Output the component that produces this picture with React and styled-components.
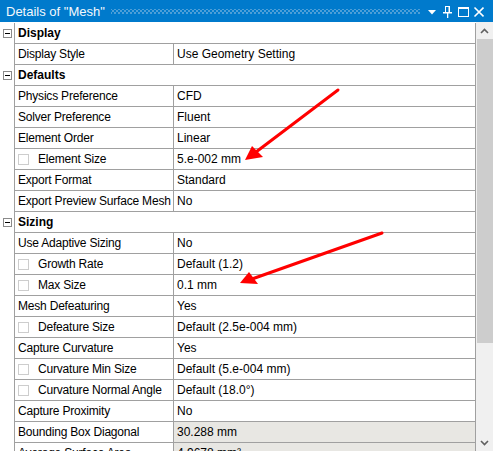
import React from 'react';
import styled, { createGlobalStyle } from 'styled-components';

// * =================================
// *       Details-Panel
// * =================================

const sections = [
  {
    title: 'Display',
    rows: [{ label: 'Display Style', value: 'Use Geometry Setting' }],
  },
  {
    title: 'Defaults',
    rows: [
      { label: 'Physics Preference', value: 'CFD' },
      { label: 'Solver Preference', value: 'Fluent' },
      { label: 'Element Order', value: 'Linear' },
      { label: 'Element Size', value: '5.e-002 mm', check: true },
      { label: 'Export Format', value: 'Standard' },
      { label: 'Export Preview Surface Mesh', value: 'No' },
    ],
  },
  {
    title: 'Sizing',
    rows: [
      { label: 'Use Adaptive Sizing', value: 'No' },
      { label: 'Growth Rate', value: 'Default (1.2)', check: true },
      { label: 'Max Size', value: '0.1 mm', check: true },
      { label: 'Mesh Defeaturing', value: 'Yes' },
      { label: 'Defeature Size', value: 'Default (2.5e-004 mm)', check: true },
      { label: 'Capture Curvature', value: 'Yes' },
      { label: 'Curvature Min Size', value: 'Default (5.e-004 mm)', check: true },
      { label: 'Curvature Normal Angle', value: 'Default (18.0°)', check: true },
      { label: 'Capture Proximity', value: 'No' },
      { label: 'Bounding Box Diagonal', value: '30.288 mm', readOnly: true },
      { label: 'Average Surface Area', value: '4.9678 mm²', readOnly: true },
    ],
  },
];

const TitleIcons = () => (
  <svg width="64" height="22" viewBox="0 0 64 22">
    {/* dropdown */}
    <polygon points="8,10 16,10 12,14.5" fill="#fff" />
    {/* pin */}
    <rect x="25.5" y="6.5" width="4" height="6" fill="none" stroke="#fff" />
    <rect x="28.5" y="6" width="1.5" height="7" fill="#fff" />
    <rect x="23" y="12" width="9" height="1.5" fill="#fff" />
    <rect x="27" y="13" width="1.3" height="5" fill="#fff" />
    {/* maximize */}
    <rect x="38.5" y="7.5" width="10" height="9" fill="none" stroke="#fff" />
    <rect x="38" y="7" width="11" height="2" fill="#fff" />
    {/* close */}
    <path d="M54.5 7.5 L63.5 16.5 M63.5 7.5 L54.5 16.5" stroke="#fff" strokeWidth="1.6" />
  </svg>
);

const Arrows = () => (
  <ArrowLayer width="493" height="451" viewBox="0 0 493 451">
    <line x1="338" y1="90" x2="256" y2="152" stroke="#ff0000" strokeWidth="3" strokeLinecap="round" />
    <polygon points="245,160 252,146 263,157" fill="#ff0000" />
    <line x1="382" y1="233" x2="252" y2="279" stroke="#ff0000" strokeWidth="3" strokeLinecap="round" />
    <polygon points="240,283 249,272 258,284" fill="#ff0000" />
  </ArrowLayer>
);

const Chevron = ({ down }) => (
  <svg width="9" height="6" viewBox="0 0 9 6">
    <path
      d={down ? 'M1 1 L4.5 4.5 L8 1' : 'M1 5 L4.5 1.5 L8 5'}
      fill="none"
      stroke="#606060"
      strokeWidth="1.6"
    />
  </svg>
);

const App = () => {
  return (
    <>
      <GlobalStyle />
      <Panel>
        <TitleBar>
          <TitleText>Details of "Mesh"</TitleText>
          <Grip />
          <TitleIcons />
        </TitleBar>
        <Body>
          <Grid>
            {sections.map((section) => (
              <React.Fragment key={section.title}>
                <Row>
                  <Gutter>
                    <Collapse />
                  </Gutter>
                  <Cells>
                    <HeaderCell>{section.title}</HeaderCell>
                  </Cells>
                </Row>
                {section.rows.map((row) => (
                  <Row key={row.label}>
                    <Gutter />
                    <Cells>
                      <LabelCell>
                        {row.check && <CheckBox />}
                        {row.label}
                      </LabelCell>
                      <ValueCell readOnly={row.readOnly}>{row.value}</ValueCell>
                    </Cells>
                  </Row>
                ))}
              </React.Fragment>
            ))}
          </Grid>
          <ScrollBar>
            <ScrollButton>
              <Chevron />
            </ScrollButton>
            <Track>
              <Thumb />
            </Track>
            <ScrollButton>
              <Chevron down />
            </ScrollButton>
          </ScrollBar>
        </Body>
        <Arrows />
      </Panel>
    </>
  );
};

//=================================
//       Styled-Component
//=================================

const GlobalStyle = createGlobalStyle`
  html, body {
    margin: 0;
    padding: 0;
    background: #fff;
  }
  body {
    font-family: "Liberation Sans", Arial, sans-serif;
  }
`;

const Panel = styled.div`
  position: relative;
  width: 493px;
  height: 451px;
  overflow: hidden;
  display: flex;
  flex-direction: column;
  background: #fff;
`;

const TitleBar = styled.div`
  height: 22px;
  flex: none;
  background: #007acc;
  display: flex;
  align-items: center;
  padding-left: 6px;
  padding-right: 9px;
`;

const TitleText = styled.span`
  color: #f4f8fc;
  font-size: 13px;
  white-space: nowrap;
`;

const Grip = styled.div`
  flex: 1;
  height: 5px;
  margin: 1px 0 0 6px;
  background-image: radial-gradient(circle, #4d9fd8 0.8px, transparent 1px),
    radial-gradient(circle, #4d9fd8 0.8px, transparent 1px);
  background-size: 4px 4px;
  background-position: 0 0, 2px 2px;
`;

const Body = styled.div`
  flex: 1;
  display: flex;
  min-height: 0;
`;

const Grid = styled.div`
  flex: 1;
  padding-top: 1px;
  overflow: hidden;
  font-size: 12px;
  line-height: 14px;
  color: #000;
`;

const Row = styled.div`
  display: flex;
  height: 21px;
`;

const Gutter = styled.div`
  width: 14px;
  flex: none;
  display: flex;
  align-items: center;
  padding-left: 3px;
  box-sizing: border-box;
`;

const Collapse = styled.div`
  position: relative;
  width: 9px;
  height: 9px;
  box-sizing: border-box;
  border: 1px solid #8a8a8a;
  margin-bottom: 1px;
  &::after {
    content: '';
    position: absolute;
    left: 1px;
    top: 3px;
    width: 5px;
    height: 1px;
    background: #000;
  }
`;

const Cells = styled.div`
  flex: 1;
  display: flex;
  border-left: 1px solid #a0a0a0;
  border-right: 1px solid #a0a0a0;
  border-bottom: 1px solid #a0a0a0;
`;

const HeaderCell = styled.div`
  flex: 1;
  display: flex;
  align-items: center;
  padding-left: 3px;
  font-weight: bold;
`;

const LabelCell = styled.div`
  width: 159px;
  flex: none;
  display: flex;
  align-items: center;
  padding-left: 3px;
  box-sizing: border-box;
  border-right: 1px solid #a0a0a0;
  white-space: nowrap;
  overflow: hidden;
  letter-spacing: -0.2px;
`;

const CheckBox = styled.span`
  width: 11px;
  height: 11px;
  box-sizing: border-box;
  border: 1px solid #cdcdcd;
  background: #fff;
  margin-right: 9px;
  flex: none;
`;

const ValueCell = styled.div`
  flex: 1;
  display: flex;
  align-items: center;
  padding-left: 3px;
  background: ${(props) => (props.readOnly ? '#e8e7e3' : '#fff')};
  white-space: nowrap;
`;

const ScrollBar = styled.div`
  width: 17px;
  flex: none;
  display: flex;
  flex-direction: column;
  background: #f0f0f0;
`;

const ScrollButton = styled.div`
  height: 17px;
  flex: none;
  display: flex;
  align-items: center;
  justify-content: center;
`;

const Track = styled.div`
  flex: 1;
  padding-left: 1px;
`;

const Thumb = styled.div`
  height: 304px;
  background: #cdcdcd;
`;

const ArrowLayer = styled.svg`
  position: absolute;
  left: 0;
  top: 0;
  pointer-events: none;
`;

export default App;
